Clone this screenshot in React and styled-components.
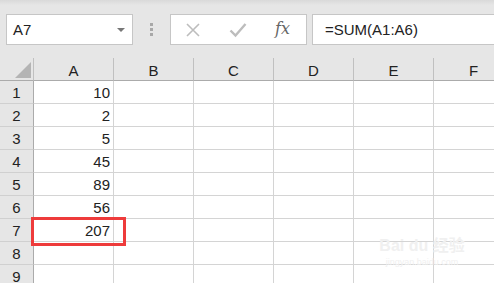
import React from 'react';
import styled, { createGlobalStyle } from 'styled-components';

const GlobalStyle = createGlobalStyle`
  html, body { margin: 0; padding: 0; background: #ffffff; }
  body { font-family: "Liberation Sans", Arial, sans-serif; overflow: hidden; }
`;

const Page = styled.div`
  position: relative;
  width: 494px;
  height: 283px;
  overflow: hidden;
  background: #ffffff;
`;

const Toolbar = styled.div`
  height: 58px;
  box-sizing: border-box;
  padding: 14px 0 0 6px;
  background: linear-gradient(to bottom, #d9d9d9 0px, #e6e6e6 5px, #e6e6e6 100%);
  display: flex;
  align-items: flex-start;
`;

const NameBox = styled.div`
  width: 127px;
  height: 31px;
  box-sizing: border-box;
  border: 1px solid #c6c6c6;
  background: #ffffff;
  display: flex;
  align-items: center;
  justify-content: space-between;
  padding: 0 7px 0 6px;
  font-size: 15px;
  color: #222;
`;

const Caret = styled.span`
  width: 0;
  height: 0;
  border-left: 4px solid transparent;
  border-right: 4px solid transparent;
  border-top: 4px solid #777;
`;

const Grip = styled.div`
  width: 37px;
  height: 31px;
  display: flex;
  flex-direction: column;
  align-items: center;
  justify-content: center;
  gap: 2px;
  span {
    width: 3px;
    height: 3px;
    background: #a8a8a8;
  }
`;

const ButtonGroup = styled.div`
  width: 137px;
  height: 31px;
  box-sizing: border-box;
  border: 1px solid #c6c6c6;
  background: #ffffff;
  display: flex;
  align-items: center;
  padding-left: 14px;
  gap: 28px;
`;

const Fx = styled.span`
  font-family: "DejaVu Serif", "Liberation Serif", serif;
  font-style: italic;
  font-size: 16px;
  color: #666;
  margin-top: -2px;
`;

const FormulaInput = styled.div`
  flex: 1;
  height: 31px;
  margin-left: 5px;
  box-sizing: border-box;
  border: 1px solid #c6c6c6;
  border-right: none;
  background: #ffffff;
  display: flex;
  align-items: center;
  padding-left: 12px;
  font-size: 15px;
  color: #222;
`;

const Grid = styled.div`
  display: grid;
  grid-template-columns: 34px repeat(6, 80px);
  grid-auto-rows: 23px;
`;

const Corner = styled.div`
  background: #e6e6e6;
  border-right: 1px solid #c0c0c0;
  border-bottom: 1px solid #ababab;
  position: relative;
  &::after {
    content: '';
    position: absolute;
    right: 2px;
    bottom: 2px;
    width: 0;
    height: 0;
    border-left: 16px solid transparent;
    border-bottom: 16px solid #b4b4b4;
  }
`;

const ColHead = styled.div`
  background: #e6e6e6;
  border-right: 1px solid #c0c0c0;
  border-bottom: 1px solid #ababab;
  display: flex;
  align-items: center;
  justify-content: center;
  font-size: 15px;
  color: #222;
  padding-top: 2px;
`;

const RowHead = styled.div`
  background: #e6e6e6;
  border-right: 1px solid #ababab;
  border-bottom: 1px solid #d0d0d0;
  display: flex;
  align-items: center;
  justify-content: center;
  font-size: 15px;
  color: #222;
  padding-top: 1px;
`;

const Cell = styled.div`
  border-right: 1px solid #d4d4d4;
  border-bottom: 1px solid #d4d4d4;
  display: flex;
  align-items: center;
  justify-content: flex-end;
  padding: 1px 3px 0 0;
  font-size: 15px;
  color: #222;
`;

const Highlight = styled.div`
  position: absolute;
  left: 31px;
  top: 217px;
  width: 95px;
  height: 29px;
  box-sizing: border-box;
  border: 3px solid #ee3b3b;
`;

const Watermark = styled.div`
  position: absolute;
  left: 377px;
  top: 238px;
  width: 90px;
  color: #f0f0f0;
  font-family: "Liberation Sans", "Noto Sans CJK SC", sans-serif;
  text-align: center;
  line-height: 1;
  div:first-child { font-size: 16px; font-weight: bold; letter-spacing: 0; }
  div:last-child { font-size: 9px; margin-top: 4px; }
`;

const cols = ['A', 'B', 'C', 'D', 'E', 'F'];
const values = [10, 2, 5, 45, 89, 56, 207, '', ''];

function Cross() {
  return (
    <svg width="16" height="16" viewBox="0 0 16 16">
      <path d="M2 2 L14 14 M14 2 L2 14" stroke="#bdbdbd" strokeWidth="1.6" fill="none" />
    </svg>
  );
}

function Check() {
  return (
    <svg width="18" height="16" viewBox="0 0 18 16">
      <path d="M1.5 8.5 L6.5 13.5 L16.5 2" stroke="#bdbdbd" strokeWidth="2.4" fill="none" />
    </svg>
  );
}

export default function App() {
  return (
    <Page>
      <GlobalStyle />
      <Toolbar>
        <NameBox>
          <span>A7</span>
          <Caret />
        </NameBox>
        <Grip><span /><span /><span /></Grip>
        <ButtonGroup>
          <Cross />
          <Check />
          <Fx>fx</Fx>
        </ButtonGroup>
        <FormulaInput>=SUM(A1:A6)</FormulaInput>
      </Toolbar>
      <Grid>
        <Corner />
        {cols.map((c) => <ColHead key={c}>{c}</ColHead>)}
        {values.map((v, i) => (
          <React.Fragment key={i}>
            <RowHead>{i + 1}</RowHead>
            {cols.map((c) => (
              <Cell key={c}>{c === 'A' ? v : ''}</Cell>
            ))}
          </React.Fragment>
        ))}
      </Grid>
      <Highlight />
      <Watermark>
        <div>Bai du 经验</div>
        <div>jingyan.baidu.com</div>
      </Watermark>
    </Page>
  );
}
